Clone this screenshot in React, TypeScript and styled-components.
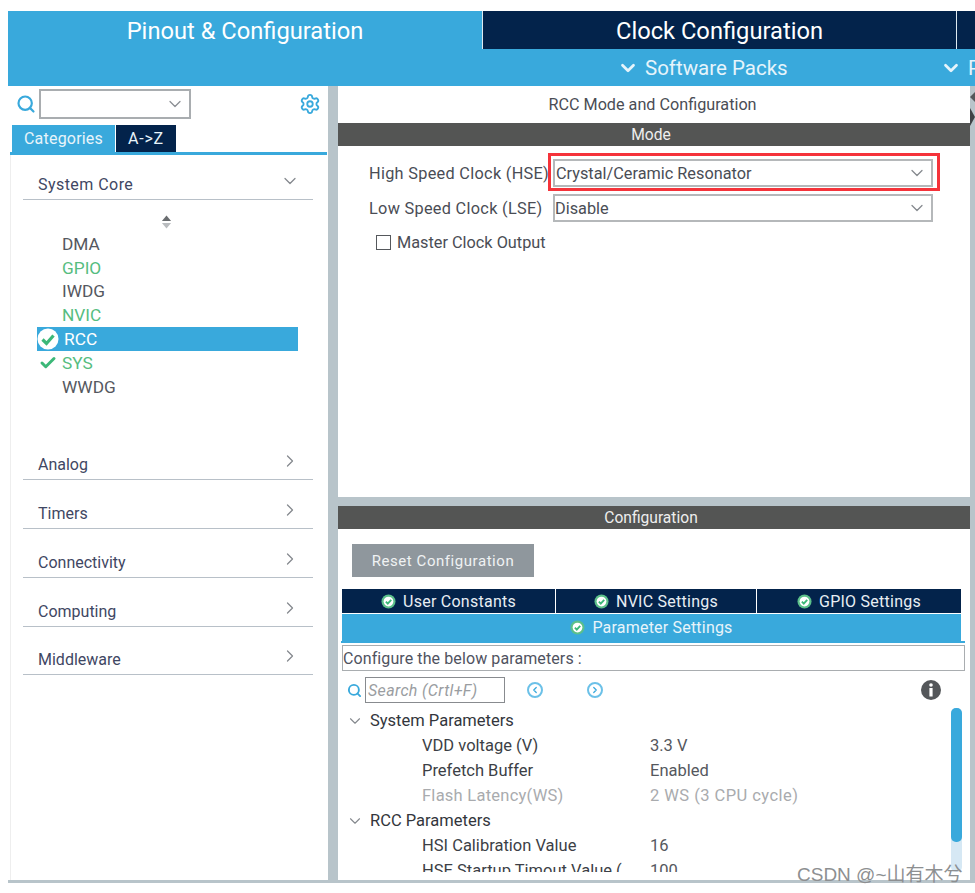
import styled, { createGlobalStyle } from "styled-components";
import { Check, ChevronDown, ChevronLeft, ChevronRight, Search, Settings } from "lucide-react";

const GlobalStyle = createGlobalStyle`
  html, body {
    margin: 0;
    padding: 0;
    background: #ffffff;
  }
  * {
    box-sizing: border-box;
  }
  svg {
    flex-shrink: 0;
  }
`;

const BLUE = "#39a9dc";
const NAVY = "#03234b";
const GREEN = "#3cb878";

const Page = styled.div`
  position: relative;
  width: 975px;
  height: 893px;
  padding: 11px 0 0 8px;
  overflow: hidden;
  font-family: Roboto, "Liberation Sans", sans-serif;
  color: #4a4d55;
`;

const TopTabs = styled.div`
  display: flex;
  height: 38px;
  background: #dfeaf0;
`;

const TopTab = styled.div<{ $active?: boolean; $w: number }>`
  width: ${(p) => p.$w}px;
  flex: none;
  display: flex;
  align-items: center;
  justify-content: center;
  padding-top: 2px;
  margin-right: 1px;
  background: ${(p) => (p.$active ? BLUE : NAVY)};
  color: #ffffff;
  font-size: 23.7px;
  font-weight: 400;
  white-space: nowrap;
`;

const SubBar = styled.div`
  display: flex;
  height: 37px;
  background: ${BLUE};
  color: #e6f4fb;
  font-size: 20.5px;
  align-items: center;
  overflow: hidden;
`;

const SubItem = styled.div<{ $w: number }>`
  width: ${(p) => p.$w}px;
  flex: none;
  display: flex;
  align-items: center;
  gap: 6px;
  white-space: nowrap;
`;

const SubSpacer = styled.div`
  width: 609px;
  flex: none;
`;

const Body = styled.div`
  display: flex;
  height: 797px;
  background: #b8c4ca;
  padding-bottom: 3px;
`;

const Sidebar = styled.div`
  width: 320px;
  flex: none;
  background: #ffffff;
`;

const SearchRow = styled.div`
  display: flex;
  height: 39px;
  padding: 3px 0 0 8px;
  align-items: flex-start;
  color: ${BLUE};
`;

const SearchIcon = styled.div`
  width: 23px;
  height: 30px;
  display: flex;
  align-items: center;
`;

const Combo = styled.div`
  width: 152px;
  height: 30px;
  border: 2px solid #a9adb0;
  display: flex;
  align-items: center;
  justify-content: flex-end;
  padding-right: 4px;
  color: #8b8f94;
`;

const GearWrap = styled.div`
  margin-left: 108px;
  height: 30px;
  display: flex;
  align-items: center;
`;

const ViewTabs = styled.div`
  display: flex;
  height: 27px;
  padding-left: 4px;
  gap: 1px;
`;

const ViewTab = styled.div<{ $active?: boolean; $w: number }>`
  width: ${(p) => p.$w}px;
  background: ${(p) => (p.$active ? BLUE : NAVY)};
  color: #e8f4fa;
  font-size: 16px;
  letter-spacing: ${(p) => (p.$active ? 0.2 : 0.8)}px;
  display: flex;
  align-items: center;
  justify-content: center;
`;

const BlueRule = styled.div`
  height: 3px;
  margin: 0 1px 0 2px;
  background: ${BLUE};
`;

const Tree = styled.div`
  height: 725px;
  margin-left: 2px;
  border-left: 1px solid #eeeeee;
  padding: 0 15px 0 12px;
`;

const GroupHead = styled.div<{ $h?: number; $mt?: number; $wide?: boolean }>`
  height: ${(p) => p.$h ?? 49}px;
  margin-top: ${(p) => p.$mt ?? 0}px;
  border-bottom: 1px solid #b8c0c8;
  display: flex;
  align-items: flex-end;
  justify-content: space-between;
  padding: 0 13px 5px 15px;
  font-size: 16px;
  letter-spacing: ${(p) => (p.$wide ? 0.45 : 0)}px;
  color: #3f4763;
  svg {
    color: #85898e;
    margin-bottom: 3px;
  }
`;

const SortMark = styled.div`
  height: 32px;
  display: flex;
  align-items: flex-end;
  justify-content: center;
  padding: 0 4px 3px 0;
`;

const Peripherals = styled.div`
  margin-left: 14px;
  width: 261px;
`;

const Peripheral = styled.div<{ $selected?: boolean; $ok?: boolean }>`
  height: 23.8px;
  display: flex;
  align-items: center;
  padding-left: ${(p) => (p.$selected ? 27 : 25)}px;
  position: relative;
  font-size: 17.3px;
  background: ${(p) => (p.$selected ? BLUE : "transparent")};
  color: ${(p) => (p.$selected ? "#ffffff" : p.$ok ? "#56bd7f" : "#555860")};
`;

const StatusIcon = styled.span`
  position: absolute;
  left: 1px;
  top: 2px;
  display: flex;
  width: 20px;
  height: 20px;
  align-items: center;
  justify-content: center;
`;

const Main = styled.div`
  width: 632px;
  margin-left: 10px;
  flex: none;
  display: flex;
  flex-direction: column;
`;

const ModePanel = styled.div`
  height: 411px;
  background: #ffffff;
  flex: none;
`;

const PanelTitle = styled.div`
  height: 37px;
  display: flex;
  align-items: center;
  justify-content: center;
  padding-right: 3px;
  font-size: 16.2px;
`;

const DarkBar = styled.div`
  height: 23px;
  background: #545554;
  color: #eeeeee;
  font-size: 15.6px;
  display: flex;
  align-items: center;
  justify-content: center;
  padding: 1px 6px 0 0;
`;

const ModeForm = styled.div`
  display: flex;
  flex-direction: column;
  padding: 13px 37px 0 31px;
`;

const FieldRow = styled.div`
  display: flex;
  align-items: center;
  height: 28px;
  margin-bottom: 7px;
  font-size: 16.3px;
  position: relative;
`;

const FieldLabel = styled.div`
  width: 184px;
  flex: none;
  letter-spacing: 0.3px;
  white-space: nowrap;
`;

const Select = styled.div<{ $tight?: boolean }>`
  flex: 1;
  height: 100%;
  border: 2px solid #b5b8ba;
  display: flex;
  align-items: center;
  justify-content: space-between;
  padding: 0 4px 0 ${(p) => (p.$tight ? 0 : 1)}px;
  svg {
    color: #85898e;
  }
`;

const Highlight = styled.div`
  position: absolute;
  left: 179px;
  top: -6px;
  width: 392px;
  height: 38px;
  border: 3px solid #f5333a;
  pointer-events: none;
`;

const CheckRow = styled.div`
  display: flex;
  align-items: center;
  gap: 6px;
  margin: 1px 0 0 7px;
  height: 24px;
  font-size: 16.3px;
`;

const CheckBox = styled.div`
  width: 15px;
  height: 15px;
  border: 1px solid #55585c;
`;

const ConfigPanel = styled.div`
  margin-top: 9px;
  flex: 1;
  min-height: 0;
  background: #ffffff;
  overflow: hidden;
`;

const ResetRow = styled.div`
  padding: 15px 0 12px 14px;
`;

const ResetButton = styled.div`
  width: 182px;
  height: 33px;
  background: #8f979d;
  color: #f0f2f3;
  font-size: 15px;
  letter-spacing: 0.55px;
  display: flex;
  align-items: center;
  justify-content: center;
`;

const SettingTabs = styled.div`
  display: flex;
  gap: 1px;
  height: 24px;
  margin: 0 9px 0 4px;
`;

const SettingTab = styled.div<{ $w: number }>`
  width: ${(p) => p.$w}px;
  flex: none;
  background: ${NAVY};
  color: #e8eef4;
  font-size: 16px;
  letter-spacing: 0.25px;
  display: flex;
  align-items: center;
  justify-content: center;
  gap: 7px;
`;

const ActiveTab = styled.div`
  height: 27px;
  margin: 1px 9px 0 4px;
  background: ${BLUE};
  color: #e8f4fa;
  font-size: 16px;
  letter-spacing: 0.2px;
  display: flex;
  align-items: center;
  justify-content: center;
  gap: 7px;
`;

const TabRule = styled.div`
  height: 2px;
  margin: 0 5px 0 3px;
  background: ${BLUE};
`;

const NoteBox = styled.div`
  height: 26px;
  margin: 2px 5px 0 4px;
  border: 1px solid #a9adb0;
  display: flex;
  align-items: center;
  font-size: 16px;
  letter-spacing: 0.1px;
  color: #50535f;
`;

const ToolRow = styled.div`
  display: flex;
  align-items: center;
  height: 26px;
  margin-top: 6px;
  padding-left: 9px;
  color: ${BLUE};
`;

const SearchBox = styled.div`
  width: 140px;
  height: 26px;
  margin-left: 3px;
  border: 1px solid #888b8f;
  font-size: 16px;
  font-style: italic;
  letter-spacing: 0.35px;
  color: #9a9da1;
  display: flex;
  align-items: center;
  padding-left: 2px;
`;

const RoundButton = styled.div<{ $ml: number }>`
  width: 16px;
  height: 16px;
  margin-left: ${(p) => p.$ml}px;
  border: 2px solid #6cc1e8;
  border-radius: 50%;
  display: flex;
  align-items: center;
  justify-content: center;
  color: ${BLUE};
`;

const InfoWrap = styled.div`
  margin-left: 318px;
  display: flex;
`;

const ParamArea = styled.div`
  position: relative;
  height: 164px;
  margin-top: 5px;
  overflow: hidden;
  padding-left: 8px;
`;

const ParamHead = styled.div`
  height: 25px;
  display: flex;
  align-items: center;
  gap: 6px;
  font-size: 16.5px;
  color: #33363c;
  svg {
    color: #85898e;
  }
`;

const ParamRow = styled.div<{ $off?: boolean }>`
  height: 25px;
  display: grid;
  grid-template-columns: 228px 1fr;
  align-items: center;
  padding-left: 76px;
  font-size: 16.5px;
  white-space: nowrap;
  letter-spacing: ${(p) => (p.$off ? 0.25 : 0)}px;
  color: ${(p) => (p.$off ? "#a9abae" : "#3c3f46")};
`;

const ParamValue = styled.span<{ $off?: boolean }>`
  letter-spacing: ${(p) => (p.$off ? 0.45 : 0)}px;
  color: ${(p) => (p.$off ? "#a9abae" : "#55585e")};
`;

const ScrollTrack = styled.div`
  position: absolute;
  right: 8px;
  top: 0;
  width: 11px;
  height: 164px;
  background: #d6e8f4;
  border-radius: 5px;
`;

const ScrollThumb = styled.div`
  height: 134px;
  background: ${BLUE};
  border-radius: 5px;
`;

const SideArrows = styled.div`
  position: absolute;
  left: 970px;
  top: 92px;
  display: flex;
  flex-direction: column;
  gap: 6px;
`;

const ArrowLeft = styled.div`
  width: 0;
  height: 0;
  border-top: 5px solid transparent;
  border-bottom: 5px solid transparent;
  border-right: 5px solid #54575a;
`;

const ArrowRight = styled.div`
  width: 0;
  height: 0;
  border-top: 9px solid transparent;
  border-bottom: 9px solid transparent;
  border-left: 5px solid #3f4245;
`;

const Watermark = styled.div`
  position: absolute;
  left: 797px;
  top: 859px;
  font-size: 19px;
  color: #8d8f91;
  font-family: "Liberation Sans", "Noto Sans CJK SC", sans-serif;
  white-space: nowrap;
`;

function TabCheck() {
  return (
    <svg width="15" height="15" viewBox="0 0 16 16">
      <circle cx="8" cy="8" r="7.5" fill="#5cc08a" />
      <circle cx="8" cy="8" r="5.2" fill="#ffffff" />
      <path d="M5.2 8.2 7.2 10.2 10.9 6.2" fill="none" stroke="#3cb878" strokeWidth="2" />
    </svg>
  );
}

function SelectedCheck() {
  return (
    <svg width="22" height="22" viewBox="0 0 22 22">
      <circle cx="11" cy="11" r="10.5" fill="#ffffff" />
      <path d="M5.5 11.5 9.5 15.5 16.5 7.5" fill="none" stroke={GREEN} strokeWidth="3.2" />
    </svg>
  );
}

function SortIcon() {
  return (
    <svg width="11" height="14" viewBox="0 0 12 14">
      <path d="M6 0 11 6H1Z" fill="#6a6d70" />
      <path d="M6 14 11 8H1Z" fill="#b9bcbf" />
    </svg>
  );
}

function InfoIcon() {
  return (
    <svg width="20" height="20" viewBox="0 0 20 20">
      <circle cx="10" cy="10" r="10" fill="#54575a" />
      <circle cx="10" cy="5" r="1.8" fill="#ffffff" />
      <rect x="8.4" y="8" width="3.2" height="8.5" fill="#ffffff" />
    </svg>
  );
}

const peripherals = [
  { name: "DMA" },
  { name: "GPIO", ok: true },
  { name: "IWDG" },
  { name: "NVIC", ok: true },
  { name: "RCC", selected: true },
  { name: "SYS", ok: true, checked: true },
  { name: "WWDG" },
];

const groups = ["Timers", "Connectivity", "Computing"];

export default function App() {
  return (
    <Page>
      <GlobalStyle />
      <TopTabs>
        <TopTab $active $w={474}>Pinout &amp; Configuration</TopTab>
        <TopTab $w={473}>Clock Configuration</TopTab>
        <TopTab $w={30} />
      </TopTabs>
      <SubBar>
        <SubSpacer />
        <SubItem $w={323}>
          <ChevronDown size={22} strokeWidth={3} />
          Software Packs
        </SubItem>
        <SubItem $w={40}>
          <ChevronDown size={22} strokeWidth={3} />
          Pinout
        </SubItem>
      </SubBar>
      <Body>
        <Sidebar>
          <SearchRow>
            <SearchIcon>
              <Search size={20} strokeWidth={2.6} />
            </SearchIcon>
            <Combo>
              <ChevronDown size={20} strokeWidth={1.5} />
            </Combo>
            <GearWrap>
              <Settings size={22} strokeWidth={2} />
            </GearWrap>
          </SearchRow>
          <ViewTabs>
            <ViewTab $active $w={103}>Categories</ViewTab>
            <ViewTab $w={60}>A-&gt;Z</ViewTab>
          </ViewTabs>
          <BlueRule />
          <Tree>
            <GroupHead $h={45} $wide>
              System Core
              <ChevronDown size={20} strokeWidth={1.5} />
            </GroupHead>
            <SortMark>
              <SortIcon />
            </SortMark>
            <Peripherals>
              {peripherals.map((item) => (
                <Peripheral key={item.name} $selected={item.selected} $ok={item.ok}>
                  {item.selected && (
                    <StatusIcon>
                      <SelectedCheck />
                    </StatusIcon>
                  )}
                  {item.checked && (
                    <StatusIcon>
                      <Check size={18} strokeWidth={4} color={GREEN} />
                    </StatusIcon>
                  )}
                  {item.name}
                </Peripheral>
              ))}
            </Peripherals>
            <GroupHead $h={49} $mt={32}>
              Analog
              <ChevronRight size={20} strokeWidth={1.5} />
            </GroupHead>
            {groups.map((group) => (
              <GroupHead key={group}>
                {group}
                <ChevronRight size={20} strokeWidth={1.5} />
              </GroupHead>
            ))}
            <GroupHead $h={48}>
              Middleware
              <ChevronRight size={20} strokeWidth={1.5} />
            </GroupHead>
          </Tree>
        </Sidebar>
        <Main>
          <ModePanel>
            <PanelTitle>RCC Mode and Configuration</PanelTitle>
            <DarkBar>Mode</DarkBar>
            <ModeForm>
              <FieldRow>
                <FieldLabel>High Speed Clock (HSE)</FieldLabel>
                <Select>
                  Crystal/Ceramic Resonator
                  <ChevronDown size={20} strokeWidth={1.5} />
                </Select>
                <Highlight />
              </FieldRow>
              <FieldRow>
                <FieldLabel>Low Speed Clock (LSE)</FieldLabel>
                <Select $tight>
                  Disable
                  <ChevronDown size={20} strokeWidth={1.5} />
                </Select>
              </FieldRow>
              <CheckRow>
                <CheckBox />
                Master Clock Output
              </CheckRow>
            </ModeForm>
          </ModePanel>
          <ConfigPanel>
            <DarkBar>Configuration</DarkBar>
            <ResetRow>
              <ResetButton>Reset Configuration</ResetButton>
            </ResetRow>
            <SettingTabs>
              <SettingTab $w={213}><TabCheck />User Constants</SettingTab>
              <SettingTab $w={200}><TabCheck />NVIC Settings</SettingTab>
              <SettingTab $w={204}><TabCheck />GPIO Settings</SettingTab>
            </SettingTabs>
            <ActiveTab><TabCheck />Parameter Settings</ActiveTab>
            <TabRule />
            <NoteBox>Configure the below parameters :</NoteBox>
            <ToolRow>
              <Search size={15} strokeWidth={3} />
              <SearchBox>Search (Crtl+F)</SearchBox>
              <RoundButton $ml={22}><ChevronLeft size={10} strokeWidth={3} /></RoundButton>
              <RoundButton $ml={44}><ChevronRight size={10} strokeWidth={3} /></RoundButton>
              <InfoWrap><InfoIcon /></InfoWrap>
            </ToolRow>
            <ParamArea>
              <ParamHead><ChevronDown size={18} strokeWidth={1.5} />System Parameters</ParamHead>
              <ParamRow>VDD voltage (V)<ParamValue>3.3 V</ParamValue></ParamRow>
              <ParamRow>Prefetch Buffer<ParamValue>Enabled</ParamValue></ParamRow>
              <ParamRow $off>Flash Latency(WS)<ParamValue $off>2 WS (3 CPU cycle)</ParamValue></ParamRow>
              <ParamHead><ChevronDown size={18} strokeWidth={1.5} />RCC Parameters</ParamHead>
              <ParamRow>HSI Calibration Value<ParamValue>16</ParamValue></ParamRow>
              <ParamRow>HSE Startup Timout Value (<ParamValue>100</ParamValue></ParamRow>
              <ScrollTrack><ScrollThumb /></ScrollTrack>
            </ParamArea>
          </ConfigPanel>
        </Main>
      </Body>
      <SideArrows>
        <ArrowLeft />
        <ArrowRight />
      </SideArrows>
      <Watermark>CSDN @~山有木兮</Watermark>
    </Page>
  );
}
